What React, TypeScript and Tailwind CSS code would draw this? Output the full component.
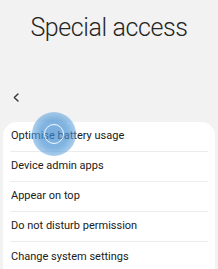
const items = [
  "Optimise battery usage",
  "Device admin apps",
  "Appear on top",
  "Do not disturb permission",
  "Change system settings",
];

export default function App() {
  return (
    <div
      className="relative h-[269px] w-[218px] overflow-hidden bg-[#f2f2f2] text-[#202020]"
      style={{ fontFamily: "Roboto, 'Noto Sans', sans-serif" }}
    >
      <h1 className="pt-[14px] text-center text-[25px] font-light leading-[28px] tracking-[-0.4px] text-[#252525]">
        Special access
      </h1>

      <div className="mt-[50px] flex h-[10px] items-center pl-[13px]">
        <svg width="6" height="9" viewBox="0 0 6 9" fill="none">
          <path d="M5 1 L1.3 4.5 L5 8" stroke="#333" strokeWidth="1.4" strokeLinecap="round" strokeLinejoin="round" />
        </svg>
      </div>

      <ul className="mx-[3px] mt-[20px] rounded-t-[14px] bg-white px-[7px]">
        {items.map((label, i) => (
          <li
            key={label}
            className={
              "flex h-[30px] items-center px-[1px] text-[11px] " +
              (i < items.length - 1 ? "border-b border-[#ececec]" : "")
            }
          >
            {label}
          </li>
        ))}
      </ul>

      {/* touch ripple */}
      <div className="pointer-events-none absolute left-[32px] top-[112px] h-[44px] w-[44px] rounded-full bg-[radial-gradient(circle,rgba(60,135,205,0.7)_0%,rgba(70,145,210,0.68)_45%,rgba(100,165,222,0.55)_70%,rgba(140,190,235,0.45)_100%)]">
        <div className="absolute left-[12px] top-[12px] h-[20px] w-[20px] rounded-full border-[1.5px] border-white/90" />
      </div>
    </div>
  );
}
